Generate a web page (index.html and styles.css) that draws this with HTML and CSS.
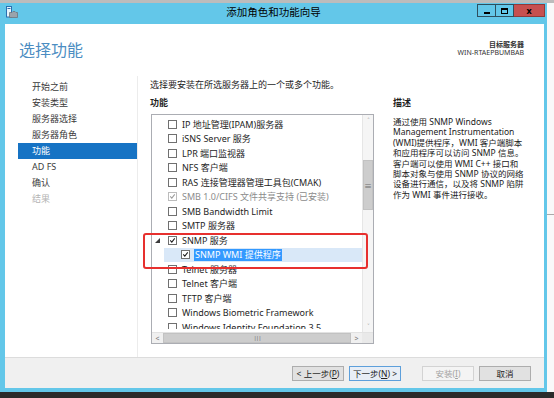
FILE: index.html
```html
<!DOCTYPE html>
<html lang="zh-CN">
<head>
  <meta charset="UTF-8">
  <meta name="viewport" content="width=device-width, initial-scale=1.0">
  <title>添加角色和功能向导</title>
  <link rel="stylesheet" href="styles.css">
</head>
<body>
  <div class="screen">
    <div class="top-strip"></div>

    <div class="desk">
      <div class="window">
        <div class="titlebar">
          <div class="tb-left">
            <svg class="app-icon" width="12" height="12" viewBox="0 0 12 12">
              <rect x="0.5" y="0.5" width="5" height="10.5" fill="#e8f4fb" stroke="#2a6fb0"/>
              <rect x="1.5" y="2" width="3" height="1" fill="#2a6fb0"/>
              <path d="M3.5 6.5 H6 L7 5.5 H9 L10 6.5 H11.5 V11.5 H3.5 Z" fill="#9aa3ab" stroke="#6d767e" stroke-width="0.8"/>
            </svg>
          </div>
          <div class="tb-title">添加角色和功能向导</div>
          <div class="tb-right">
            <span class="cap cap-min"><i></i></span>
            <span class="cap cap-max"><i></i></span>
            <span class="cap cap-close">x</span>
          </div>
        </div>

        <div class="client">
          <div class="content">
            <div class="head">
              <h1>选择功能</h1>
              <div class="target">
                <b>目标服务器</b>
                <span>WIN-RTAEPBUMBAB</span>
              </div>
            </div>

            <div class="body">
              <ul class="nav">
                <li>开始之前</li>
                <li>安装类型</li>
                <li>服务器选择</li>
                <li>服务器角色</li>
                <li class="active">功能</li>
                <li>AD FS</li>
                <li>确认</li>
                <li class="disabled">结果</li>
              </ul>

              <div class="main">
                <p class="intro">选择要安装在所选服务器上的一个或多个功能。</p>
                <div class="cols">
                  <div class="features">
                    <div class="label">功能</div>
                    <div class="tree">
                      <div class="tree-top">
                        <div class="rows">
                          <div class="row"><span class="cb"></span>IP 地址管理(IPAM)服务器</div>
                          <div class="row"><span class="cb"></span>iSNS Server 服务</div>
                          <div class="row"><span class="cb"></span>LPR 端口监视器</div>
                          <div class="row"><span class="cb"></span>NFS 客户端</div>
                          <div class="row"><span class="cb"></span>RAS 连接管理器管理工具包(CMAK)</div>
                          <div class="row installed"><span class="cb"><svg viewBox="0 0 9 9"><path d="M1.6 4.4 L3.6 6.6 L7.4 1.8"/></svg></span>SMB 1.0/CIFS 文件共享支持 (已安装)</div>
                          <div class="row"><span class="cb"></span>SMB Bandwidth Limit</div>
                          <div class="row"><span class="cb"></span>SMTP 服务器</div>
                          <div class="row parent"><span class="expander"></span><span class="cb"><svg viewBox="0 0 9 9"><path d="M1.6 4.4 L3.6 6.6 L7.4 1.8"/></svg></span>SNMP 服务</div>
                          <div class="row child"><span class="cb"><svg viewBox="0 0 9 9"><path d="M1.6 4.4 L3.6 6.6 L7.4 1.8"/></svg></span><span class="sel">SNMP WMI 提供程序</span></div>
                          <div class="row"><span class="cb"></span>Telnet 服务器</div>
                          <div class="row"><span class="cb"></span>Telnet 客户端</div>
                          <div class="row"><span class="cb"></span>TFTP 客户端</div>
                          <div class="row"><span class="cb"></span>Windows Biometric Framework</div>
                          <div class="row"><span class="cb"></span>Windows Identity Foundation 3.5</div>
                        </div>
                        <div class="vscroll">
                          <span class="sb-btn">&#708;</span>
                          <div class="sb-track"><span class="vthumb">&#8801;</span></div>
                          <span class="sb-btn">&#709;</span>
                        </div>
                      </div>
                      <div class="hscroll">
                        <span class="sb-btn">&lt;</span>
                        <span class="hthumb">|||</span>
                        <span class="sb-btn">&gt;</span>
                        <span class="sb-corner"></span>
                      </div>
                      <div class="mark"></div>
                    </div>
                  </div>

                  <div class="desc">
                    <div class="label">描述</div>
                    <p>通过使用 SNMP Windows<br>Management Instrumentation<br>(WMI)提供程序，WMI 客户端脚本<br>和应用程序可以访问 SNMP 信息。<br>客户端可以使用 WMI C++ 接口和<br>脚本对象与使用 SNMP 协议的网络<br>设备进行通信，以及将 SNMP 陷阱<br>作为 WMI 事件进行接收。</p>
                  </div>
                </div>
              </div>
            </div>
          </div>

          <div class="footer">
            <button class="btn">&lt; 上一步(<u>P</u>)</button>
            <button class="btn btn-default">下一步(<u>N</u>) &gt;</button>
            <button class="btn btn-disabled">安装(<u>I</u>)</button>
            <button class="btn">取消</button>
          </div>
        </div>
      </div>

      <div class="side"><div class="side-top"></div></div>
    </div>

    <div class="taskbar"></div>
  </div>
</body>
</html>
```

FILE: styles.css
```css
:root {
  --frame-color: #63c7e9;
  --nav-active: #1673c4;
  --text-color: #1e1e1e;
  --header-color: #4b8dc2;
  --ui-font: "Noto Sans", "Noto Sans CJK SC", sans-serif;
}

* {
  box-sizing: border-box;
}

body {
  margin: 0;
  font-family: var(--ui-font);
  color: var(--text-color);
  background: #f6f6f6;
}

.screen {
  width: 554px;
  height: 398px;
  overflow: hidden;
  display: flex;
  flex-direction: column;
}

.top-strip {
  height: 3px;
  background: #bcbcbc;
}

.desk {
  height: 389px;
  display: flex;
}

.taskbar {
  height: 6px;
  background: #2b2b2b;
}

.side {
  flex: 1;
  background: #f9f9f9;
}

.side-top {
  height: 212px;
  border-bottom: 1px solid #a9a9a9;
}

/* window frame */
.window {
  flex: none;
  width: 547px;
  background: var(--frame-color);
  display: flex;
  flex-direction: column;
}

.titlebar {
  height: 21px;
  display: grid;
  grid-template-columns: 1fr auto 1fr;
}

.tb-left {
  padding: 3px 0 0 6px;
}

.app-icon {
  display: block;
}

.tb-title {
  font-size: 10.5px;
  line-height: 19px;
  color: #000;
}

.tb-right {
  display: flex;
  justify-content: flex-end;
  align-items: flex-start;
  padding: 1px 2px 0 0;
}

.cap {
  height: 13px;
  display: flex;
  align-items: center;
  justify-content: center;
  border: 1px solid #2f4f5e;
}

.cap-min {
  width: 18px;
  border-right: none;
}

.cap-min i {
  width: 6px;
  height: 2px;
  margin-top: 4px;
  background: #000;
}

.cap-max {
  width: 19px;
}

.cap-max i {
  width: 7px;
  height: 6px;
  border: 1px solid #000;
  border-top-width: 2px;
}

.cap-close {
  width: 31px;
  background: #c75050;
  border-color: #8f3a3a;
  border-left: none;
  font-size: 9px;
  font-weight: bold;
  line-height: 11px;
  color: #000;
}

.client {
  flex: 1;
  margin: 0 3px 4px 5px;
  display: flex;
  flex-direction: column;
}

.content {
  height: 333px;
  background: #fff;
  display: flex;
  flex-direction: column;
}

.head {
  height: 52px;
  display: flex;
  justify-content: space-between;
  padding: 0 20px 0 14px;
}

h1 {
  margin: 16px 0 0;
  font-size: 16px;
  line-height: 20px;
  font-weight: normal;
  color: var(--header-color);
}

.target {
  margin-top: 17px;
  display: flex;
  flex-direction: column;
  align-items: flex-end;
  font-size: 7px;
  line-height: 8px;
  color: #333;
}

.target b {
  font-weight: bold;
}

.body {
  flex: 1;
  display: flex;
}

/* left navigation */
.nav {
  flex: none;
  list-style: none;
  margin: 0 0 0 13px;
  padding: 3px 0 0;
  width: 120px;
  border-right: 1px solid #ececec;
}

.nav li {
  height: 16px;
  line-height: 16px;
  padding-left: 14px;
  font-size: 9px;
  color: #3a3a3a;
}

.nav li.active {
  background: var(--nav-active);
  color: #fff;
}

.nav li.disabled {
  color: #b4b4b4;
}

/* main column */
.main {
  flex: 1;
  min-width: 0;
  margin-left: 12px;
  padding-top: 3px;
}

.intro {
  margin: 0;
  font-size: 9px;
  line-height: 12px;
}

.cols {
  display: flex;
}

.label {
  margin-top: 6px;
  font-size: 9px;
  line-height: 12px;
  font-weight: bold;
}

.features {
  flex: none;
  width: 224px;
}

.tree {
  position: relative;
  margin: 5px 0 0 1px;
  width: 223px;
  height: 230px;
  border: 1px solid #abadb3;
  display: flex;
  flex-direction: column;
}

.tree-top {
  height: 217px;
  display: flex;
}

.rows {
  width: 210px;
  height: 214px;
  padding-top: 2px;
  overflow: hidden;
}

.row {
  height: 14.5px;
  display: flex;
  align-items: center;
  padding-left: 16px;
  font-size: 9px;
  white-space: nowrap;
}

.row.installed {
  color: #8c8c8c;
}

.row.parent {
  padding-left: 3px;
}

.row.child {
  margin-left: 12px;
  padding-left: 17px;
  background: #d9e8f8;
}

.expander {
  width: 0;
  height: 0;
  margin-right: 8px;
  border-left: 5px solid transparent;
  border-bottom: 5px solid #3c3c3c;
}

.cb {
  flex: none;
  width: 9px;
  height: 9px;
  margin-right: 5px;
  border: 1px solid #707070;
  background: #fff;
  display: flex;
}

.cb svg {
  width: 100%;
  height: 100%;
}

.cb path {
  fill: none;
  stroke: #1a1a1a;
  stroke-width: 1.3;
}

.row.installed .cb {
  border-color: #bcbcbc;
}

.row.installed .cb path {
  stroke: #9a9a9a;
}

.sel {
  background: #3399ff;
  color: #fff;
  padding: 0 1px;
  margin-left: -1px;
  line-height: 12px;
}

/* scrollbars */
.vscroll {
  width: 11px;
  display: flex;
  flex-direction: column;
  background: #f5f5f5;
  border-left: 1px solid #e6e6e6;
}

.sb-btn {
  flex: none;
  width: 11px;
  height: 11px;
  display: flex;
  align-items: center;
  justify-content: center;
  font-size: 7px;
  color: #7a7a7a;
}

.sb-track {
  flex: 1;
}

.vthumb {
  display: flex;
  align-items: center;
  justify-content: center;
  margin-top: 34px;
  height: 50px;
  background: #cdcdcd;
  border: 1px solid #c2c2c2;
  font-size: 8px;
  color: #6e6e6e;
}

.hscroll {
  height: 11px;
  display: flex;
  background: #f0f0f0;
  border-top: 1px solid #e2e2e2;
}

.hscroll .sb-btn {
  height: 10px;
}

.hthumb {
  width: 188px;
  background: #cdcdcd;
  border: 1px solid #c2c2c2;
  display: flex;
  align-items: center;
  justify-content: center;
  font-size: 6px;
  letter-spacing: -1px;
  color: #6e6e6e;
}

.sb-corner {
  flex: 1;
  background: #e9e9e9;
}

/* annotation drawn over the list */
.mark {
  position: absolute;
  left: -9px;
  top: 118px;
  width: 225px;
  height: 36px;
  border: 2px solid #e7302e;
  border-radius: 3px;
}

.desc {
  flex: none;
  margin-left: 19px;
}

.desc p {
  margin: 8px 0 0;
  font-size: 8.5px;
  line-height: 10.4px;
  white-space: nowrap;
  color: #222;
}

/* footer buttons */
.footer {
  flex: 1;
  border-top: 1px solid #dcdcdc;
  background: #f0f0f0;
  display: flex;
  justify-content: flex-end;
  align-items: flex-start;
  padding: 8px 13px 0 0;
}

.btn {
  width: 52px;
  height: 15px;
  padding: 0;
  margin-left: 5px;
  font-family: var(--ui-font);
  font-size: 8.5px;
  line-height: 13px;
  color: #222;
  background: #e1e1e1;
  border: 1px solid #adadad;
}

.btn-default {
  background: #e8eef6;
  border-color: #5d9fdb;
}

.btn-disabled {
  margin-left: 21px;
  background: #f4f4f4;
  border-color: #d3d3d3;
  color: #a2a2a2;
}

.btn u {
  text-decoration: underline;
}
```
